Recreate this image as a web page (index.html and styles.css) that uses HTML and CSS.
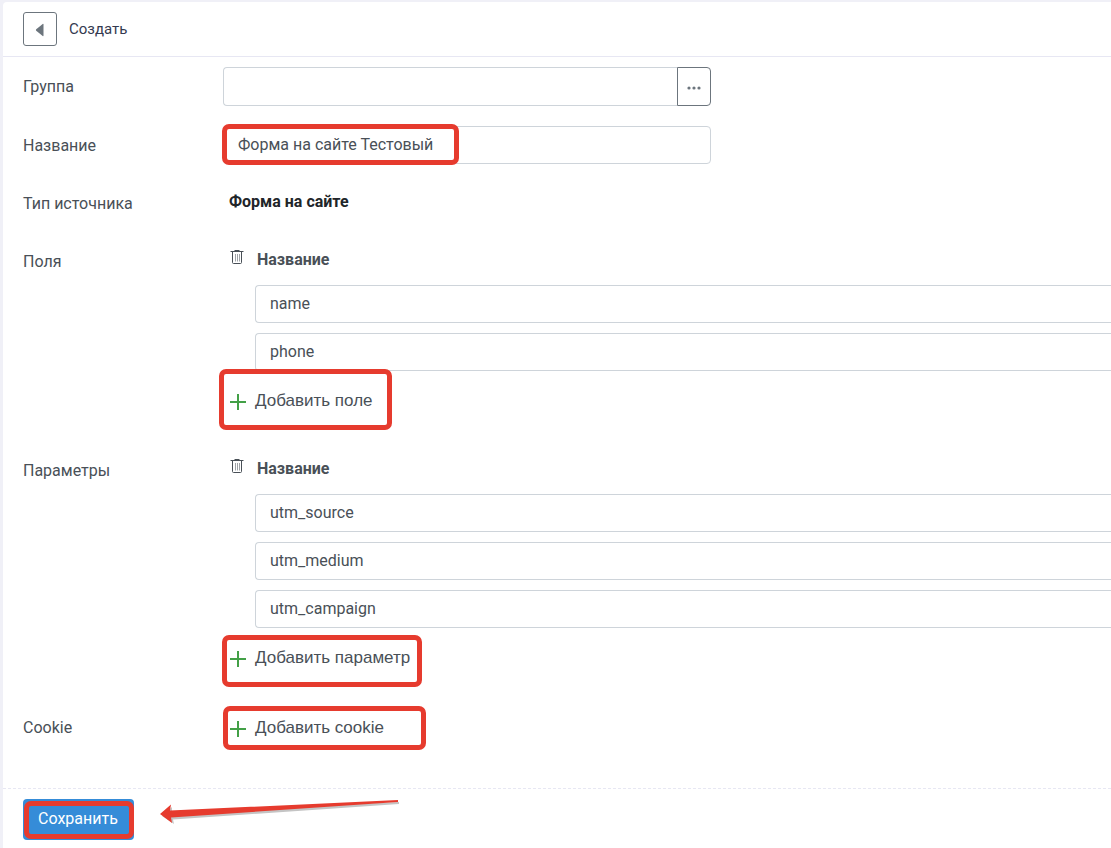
FILE: index.html
```html
<!DOCTYPE html>
<html lang="ru">
<head>
  <meta charset="UTF-8">
  <meta name="viewport" content="width=device-width, initial-scale=1">
  <title>Создать</title>
  <link rel="stylesheet" href="styles.css">
</head>
<body>
  <main class="card">
    <header class="card-header">
      <button type="button" class="btn-back" aria-label="Назад">
        <svg width="10" height="14" viewBox="0 0 10 14"><path d="M8.500 1.500v11q0 .8-.8.6L1.200 7.800Q.6 7 1.200 6.200L7.700.9q.8-.2.8.6z" fill="#6c757d"/></svg>
      </button>
      <h1>Создать</h1>
    </header>

    <form class="form">
      <div class="row">
        <label for="group">Группа</label>
        <div class="input-group">
          <input type="text" id="group" class="input">
          <button type="button" class="btn-more" aria-label="Выбрать">
            <svg width="14" height="4" viewBox="0 0 14 4" fill="#6c757d"><circle cx="2" cy="2" r="1.600"/><circle cx="7" cy="2" r="1.600"/><circle cx="12" cy="2" r="1.600"/></svg>
          </button>
        </div>
      </div>

      <div class="row">
        <label for="title">Название</label>
        <div class="field">
          <input type="text" id="title" class="input" value="Форма на сайте Тестовый">
          <span class="mark mark-title"></span>
        </div>
      </div>

      <div class="row">
        <span class="label">Тип источника</span>
        <b class="value">Форма на сайте</b>
      </div>

      <!-- Поля -->
      <div class="row row-list">
        <span class="label">Поля</span>
        <div class="list">
          <div class="list-head">
            <svg class="trash" width="14" height="16" viewBox="0 0 14 16" fill="none" stroke="#495057"><path d="M.5 2.500h13M4.500 1.500h5M2.500 3v10.500q0 1 1 1h7q1 0 1-1V3"/><path d="M5.500 5v7.500M7.500 5v7.500M9.500 5v7.500" stroke-width=".8" stroke="#868b91"/></svg>
            <b>Название</b>
          </div>
          <input type="text" class="input" value="name" aria-label="Поле 1">
          <input type="text" class="input" value="phone" aria-label="Поле 2">
          <div class="add">
            <button type="button" class="btn-add">
              <svg width="16" height="16" viewBox="0 0 16 16" stroke="#43a047" stroke-width="2"><path d="M8 0v16M0 8h16"/></svg>
              Добавить поле
            </button>
            <span class="mark mark-field"></span>
          </div>
        </div>
      </div>

      <!-- Параметры -->
      <div class="row row-list">
        <span class="label">Параметры</span>
        <div class="list">
          <div class="list-head">
            <svg class="trash" width="14" height="16" viewBox="0 0 14 16" fill="none" stroke="#495057"><path d="M.5 2.500h13M4.500 1.500h5M2.500 3v10.500q0 1 1 1h7q1 0 1-1V3"/><path d="M5.500 5v7.500M7.500 5v7.500M9.500 5v7.500" stroke-width=".8" stroke="#868b91"/></svg>
            <b>Название</b>
          </div>
          <input type="text" class="input" value="utm_source" aria-label="Параметр 1">
          <input type="text" class="input" value="utm_medium" aria-label="Параметр 2">
          <input type="text" class="input" value="utm_campaign" aria-label="Параметр 3">
          <div class="add">
            <button type="button" class="btn-add">
              <svg width="16" height="16" viewBox="0 0 16 16" stroke="#43a047" stroke-width="2"><path d="M8 0v16M0 8h16"/></svg>
              Добавить параметр
            </button>
            <span class="mark mark-param"></span>
          </div>
        </div>
      </div>

      <!-- Cookie -->
      <div class="row row-list">
        <span class="label">Cookie</span>
        <div class="add">
          <button type="button" class="btn-add">
            <svg width="16" height="16" viewBox="0 0 16 16" stroke="#43a047" stroke-width="2"><path d="M8 0v16M0 8h16"/></svg>
            Добавить cookie
          </button>
          <span class="mark mark-cookie"></span>
        </div>
      </div>

      <footer class="form-footer">
        <div class="save">
          <button type="submit" class="btn-save">Сохранить</button>
          <span class="mark mark-save"></span>
        </div>
        <svg class="arrow" width="240" height="26" viewBox="0 0 240 26">
          <path d="M2 17L12 8v5L239 3v2L13 20.500l1 4.500z" fill="#c4c4c4"/>
          <path d="M0 15L11 5.500l-1 6L238 1v2L11 18.500l1 5.500z" fill="#e63b2e"/>
        </svg>
      </footer>
    </form>
  </main>
</body>
</html>
```

FILE: styles.css
```css
*{box-sizing:border-box}
body{margin:0;padding:2px 0 0 3px;background:#f0f0f7;font-family:Roboto,"Liberation Sans",sans-serif;font-size:16px;color:#495057}
button,input{font:inherit;color:inherit}
button{cursor:pointer}
svg{display:block;flex:none}

.card{min-height:calc(100vh - 2px);background:#fff;border-top-left-radius:4px}
.card-header{display:flex;align-items:center;gap:12px;height:55px;padding:0 20px;border-bottom:1px solid #e7e7f3}
.card-header h1{margin:0;font-size:15px;font-weight:400;color:#343a50}
.btn-back{display:flex;align-items:center;justify-content:center;width:34px;height:34px;padding:2px 0 0;border:1px solid #6c757d;border-radius:3px;background:#fff}

.form{padding-top:10px}
.row{display:grid;grid-template-columns:200px 1fr;margin-bottom:20px;padding-left:20px}
.row label,.label{padding-top:2px;line-height:36px}
.value{padding-left:6px;font-weight:700;color:#212529;line-height:36px}
.row-list{margin-bottom:32px}

.input{display:block;width:100%;height:38px;padding:0 14px 2px;border:1px solid #ced4da;border-radius:4px;background:#fff;outline:0}
.field,.input-group{position:relative;max-width:488px}
.input-group{display:flex;height:39px}
.input-group .input{height:auto;border-right:0;border-radius:4px 0 0 4px}
.btn-more{display:flex;flex:none;align-items:center;justify-content:center;width:34px;padding:2px 0 0;border:1px solid #6c757d;border-radius:0 4px 4px 0;background:#fff}

/* списки */
.list{display:flex;flex-direction:column;gap:10px}
.list-head{display:flex;gap:13px;height:33px;padding-left:7px;line-height:35px}
.trash{margin-top:7px}
.list>.input{width:auto;margin-left:32px;border-right:0;border-radius:4px 0 0 4px}
.add{position:relative}
.btn-add{display:flex;align-items:center;gap:9px;height:38px;padding:2px 0 0 7px;border:0;background:none;font-family:"Liberation Sans",Arial,sans-serif;font-size:17px}
.btn-add svg{margin-top:2px}

.form-footer{display:flex;gap:26px;margin-top:42px;padding:10px 20px;border-top:1px dashed #e7e7f3}
.save{position:relative}
.btn-save{display:block;height:41px;padding:0 16px 2px 15px;border:0;border-radius:4px;background:#358cd8;color:#fff}
.arrow{overflow:visible}

/* красные рамки */
.mark{position:absolute;z-index:1;border:5px solid #e63b2e;border-radius:7px;pointer-events:none}
.mark-title{left:-1px;top:-2px;width:237px;height:41px}
.mark-field{left:-4px;top:-12px;width:173px;height:61px}
.mark-param{left:-1px;top:-3px;width:200px;height:52px}
.mark-cookie{left:0;top:-2px;width:203px;height:44px}
.mark-save{inset:2px 0 1px 1px}
```
